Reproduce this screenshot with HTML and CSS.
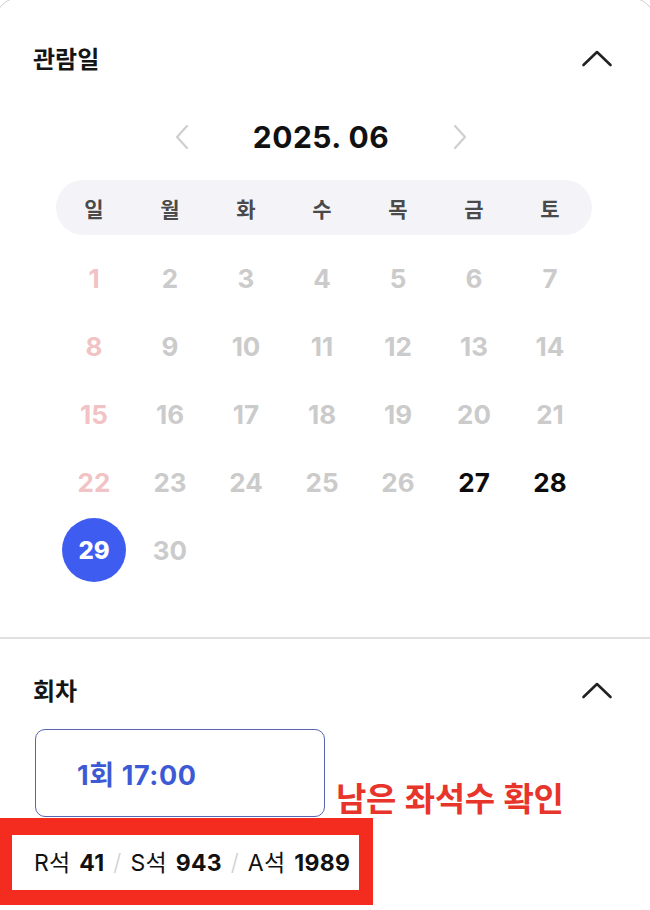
FILE: index.html
```html
<!DOCTYPE html>
<html lang="ko">
<head>
<meta charset="utf-8">
<link rel="stylesheet" href="styles.css">
</head>
<body>
<div class="card">
  <section class="sec sec-date">
    <div class="sec-head">
      <h2 class="sec-title">관람일</h2>
      <svg class="chev-up" width="32" height="18" viewBox="0 0 32 18"><path d="M2.5 16 L16 3 L29.5 16" fill="none" stroke="#222" stroke-width="2.6" stroke-linecap="round" stroke-linejoin="round"/></svg>
    </div>
    <div class="cal">
      <div class="month-nav">
        <svg class="nav-chev" width="14" height="26" viewBox="0 0 14 26"><path d="M12 2 L2 13 L12 24" fill="none" stroke="#cfcfcf" stroke-width="2.2" stroke-linecap="round" stroke-linejoin="round"/></svg>
        <div class="month">2025. 06</div>
        <svg class="nav-chev" width="14" height="26" viewBox="0 0 14 26"><path d="M2 2 L12 13 L2 24" fill="none" stroke="#cfcfcf" stroke-width="2.2" stroke-linecap="round" stroke-linejoin="round"/></svg>
      </div>
      <div class="weekdays">
        <span>일</span><span>월</span><span>화</span><span>수</span><span>목</span><span>금</span><span>토</span>
      </div>
      <div class="days">
        <span class="sun">1</span><span>2</span><span>3</span><span>4</span><span>5</span><span>6</span><span>7</span>
        <span class="sun">8</span><span>9</span><span>10</span><span>11</span><span>12</span><span>13</span><span>14</span>
        <span class="sun">15</span><span>16</span><span>17</span><span>18</span><span>19</span><span>20</span><span>21</span>
        <span class="sun">22</span><span>23</span><span>24</span><span>25</span><span>26</span><span class="on">27</span><span class="on">28</span>
        <span class="sel"><b>29</b></span><span>30</span>
      </div>
    </div>
  </section>
  <section class="sec sec-time">
    <div class="sec-head">
      <h2 class="sec-title">회차</h2>
      <svg class="chev-up" width="32" height="18" viewBox="0 0 32 18"><path d="M2.5 16 L16 3 L29.5 16" fill="none" stroke="#222" stroke-width="2.6" stroke-linecap="round" stroke-linejoin="round"/></svg>
    </div>
    <div class="time-row">
      <button class="time-btn">1회 17:00</button>
      <span class="note">남은 좌석수 확인</span>
    </div>
    <div class="seats">
      <span class="seats-text">R석 <b>41</b> <i>/</i> S석 <b>943</b> <i>/</i> A석 <b>1989</b></span>
    </div>
  </section>
</div>
</body>
</html>
```
FILE: styles.css
```css
html, body {
  margin: 0;
  padding: 0;
  background: #fff;
  overflow: hidden;
  height: 910px;
}
body {
  font-family: Inter, "Noto Sans CJK KR", sans-serif;
  color: #111;
}
.card {
  margin: -3px -6px 0;
  border: 1px solid #cfcfcf;
  border-radius: 26px;
  background: #fff;
  height: 940px;
}
.sec-head {
  display: flex;
  align-items: center;
  justify-content: space-between;
  height: 30px;
  padding-right: 42px;
}
.sec-title {
  margin: 0;
  font-family: "Noto Sans CJK KR", sans-serif;
  font-size: 24px;
  font-weight: 700;
  line-height: 30px;
  color: #151515;
}
.sec-date {
  padding: 45px 0 53px 38px;
  border-bottom: 2px solid #e0e0e0;
}
.cal {
  margin-left: 23px;
  width: 536px;
  margin-top: 44px;
}
.month-nav {
  display: flex;
  align-items: center;
  justify-content: space-between;
  width: 292px;
  margin-left: 119px;
  height: 40px;
}
.month {
  font-size: 30px;
  font-weight: 700;
  letter-spacing: 0.5px;
  color: #111;
}
.weekdays {
  margin-top: 23px;
  height: 55px;
  border-radius: 28px;
  background: #f4f4f8;
  display: grid;
  grid-template-columns: repeat(7, 76px);
  align-items: center;
  justify-items: center;
}
.weekdays span {
  font-family: "Noto Sans CJK KR", sans-serif;
  font-size: 21px;
  font-weight: 700;
  color: #4a4a4a;
}
.days {
  margin-top: 9px;
  display: grid;
  grid-template-columns: repeat(7, 76px);
  grid-auto-rows: 68px;
  align-items: center;
  justify-items: center;
}
.days span {
  font-size: 26px;
  font-weight: 700;
  color: #cbcbcb;
}
.days .sun { color: #f1c3c5; }
.days .on { color: #0c0c0c; }
.days .sel {
  width: 64px;
  height: 64px;
  border-radius: 50%;
  background: #3f5cf0;
  display: flex;
  align-items: center;
  justify-content: center;
}
.days .sel b {
  color: #fff;
  font-weight: 800;
  font-size: 24px;
}
.sec-time {
  padding: 36px 0 0 38px;
}
.time-row {
  margin-top: 24px;
  display: flex;
  align-items: flex-end;
  gap: 11px;
  margin-left: 2px;
}
.time-btn {
  width: 290px;
  height: 88px;
  border: 1.5px solid #5865b0;
  border-radius: 10px;
  background: #fff;
  text-align: left;
  padding: 0 0 0 41px;
  font-family: Inter, "Noto Sans CJK KR", sans-serif;
  font-size: 27px;
  font-weight: 700;
  letter-spacing: 0.6px;
  color: #3d5ad4;
}
.note {
  font-family: "Noto Sans CJK KR", sans-serif;
  font-size: 33px;
  font-weight: 700;
  line-height: 40px;
  color: #e8352b;
  margin-bottom: 0;
  letter-spacing: -0.4px;
}
.seats {
  margin-left: -35px;
  margin-top: 1px;
  width: 325px;
  height: 55px;
  border: 14px solid #f42b1f;
  border-top-width: 17px;
  border-bottom-width: 15px;
  display: flex;
  align-items: center;
  padding-left: 22px;
}
.seats-text {
  font-size: 23px;
  line-height: 28px;
  color: #111;
  white-space: nowrap;
  word-spacing: 2px;
  letter-spacing: 0.3px;
}
.seats b { font-weight: 700; }
.seats i {
  font-style: normal;
  color: #cfcfcf;
  font-weight: 300;
}
```
